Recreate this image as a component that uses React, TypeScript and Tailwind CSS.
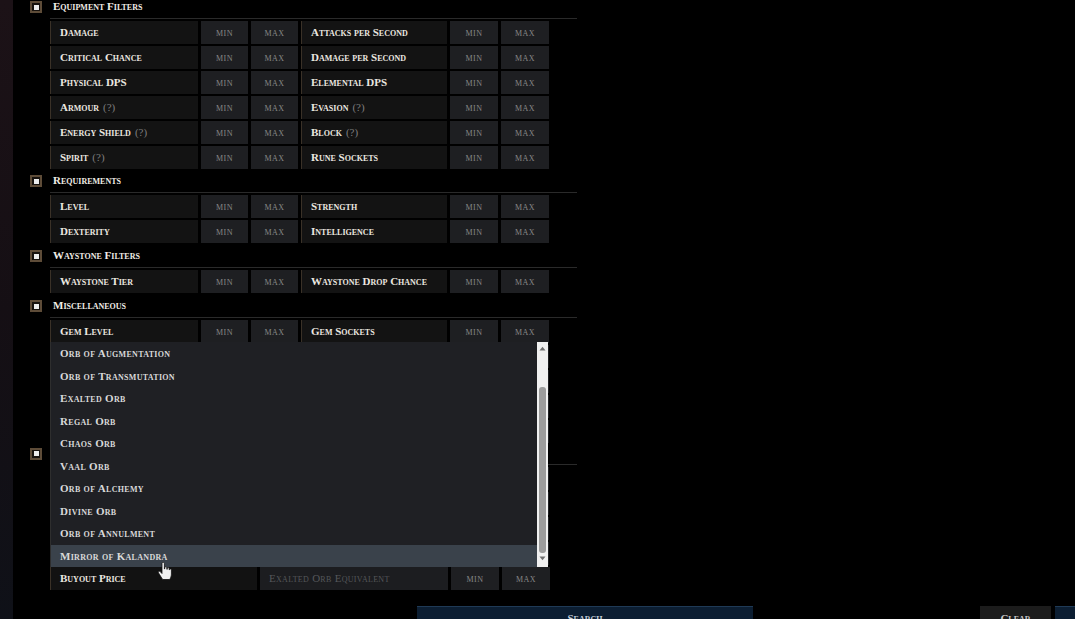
import React from "react";

type Label = { text: string; q?: boolean };

const font = "[font-family:'Liberation_Serif',serif] [font-variant-caps:small-caps]";

function Checkbox() {
  return (
    <div className="w-[12px] h-[12px] border-2 border-[#5e4c38] bg-[#17120e] flex items-center justify-center">
      <div className="w-[5px] h-[5px] bg-[#ececec]" />
    </div>
  );
}

function LabelCell({ label }: { label?: Label }) {
  return (
    <div className="bg-[#131313] border-l border-[#3a3127] pl-[9px] flex items-center text-[11px] font-bold text-[#ece8e0] whitespace-nowrap">
      {label ? (
        <>
          <span>{label.text}</span>
          {label.q && <span className="ml-[4px] font-normal text-[#7e7e7e]">(?)</span>}
        </>
      ) : null}
    </div>
  );
}

function MinMax({ text }: { text: string }) {
  return (
    <div className="bg-[#1e1f22] flex items-center justify-center pb-[2px] text-[12px] tracking-[0.5px] text-[#878787]">
      {text}
    </div>
  );
}

function Row({ a, b }: { a?: Label; b?: Label }) {
  return (
    <div className="grid grid-cols-[148px_47px_47px_146px_48px_48px] gap-x-[3px] h-[23px] w-[499px]">
      <LabelCell label={a} />
      <MinMax text={a ? "min" : ""} />
      <MinMax text={a ? "max" : ""} />
      <LabelCell label={b} />
      <MinMax text={b ? "min" : ""} />
      <MinMax text={b ? "max" : ""} />
    </div>
  );
}

function Section({
  title,
  headerClass = "h-[22px]",
  className = "",
  children,
}: {
  title?: string;
  headerClass?: string;
  className?: string;
  children: React.ReactNode;
}) {
  return (
    <div className={"flex " + className}>
      <div className="w-[37px] shrink-0 flex flex-col">
        <div className={headerClass + " box-content pb-[1px] flex items-center justify-end pr-[8px]"}>
          <Checkbox />
        </div>
      </div>
      <div className="w-[527px]">
        <div
          className={
            headerClass +
            " box-content border-b border-[#2a2a2a] pl-[3px] flex items-center text-[11px] font-bold text-[#f1ede6]"
          }
        >
          <span className="-mt-[2px]">{title}</span>
        </div>
        <div className="pt-[2px] flex flex-col gap-[2px]">{children}</div>
      </div>
    </div>
  );
}

const currencies = [
  "Orb of Augmentation",
  "Orb of Transmutation",
  "Exalted Orb",
  "Regal Orb",
  "Chaos Orb",
  "Vaal Orb",
  "Orb of Alchemy",
  "Divine Orb",
  "Orb of Annulment",
  "Mirror of Kalandra",
];

function Dropdown() {
  return (
    <div className="absolute left-0 bottom-full w-[498px] h-[225px] bg-[#1f2024] border-l border-[#2e2e2e] z-10 flex">
      <div className="flex-1 flex flex-col">
        {currencies.map((c, i) => (
          <div
            key={c}
            className={
              "h-[22.5px] flex items-center pl-[9px] text-[11px] font-bold tracking-[0.3px] text-[#d9d9d9] " +
              (i === currencies.length - 1 ? "bg-[#3a424b]" : "")
            }
          >
            {c}
          </div>
        ))}
      </div>
      <div className="w-[11px] bg-[#f0f0f0] flex flex-col items-center">
        <svg width="7" height="5" viewBox="0 0 7 5" className="mt-[4px]">
          <path d="M0.5 4.5 L3.5 0.8 L6.5 4.5 Z" fill="#6e6e6e" />
        </svg>
        <div className="mt-[36px] w-[7px] h-[166px] rounded-[3px] bg-[#9c9c9c]" />
        <svg width="7" height="5" viewBox="0 0 7 5" className="mt-[3px]">
          <path d="M0.5 0.5 L3.5 4.2 L6.5 0.5 Z" fill="#6e6e6e" />
        </svg>
      </div>
    </div>
  );
}

function BuyoutRow() {
  return (
    <div className="relative grid grid-cols-[207px_188px_48px_48px] gap-x-[3px] h-[23px] w-[499px]">
      <Dropdown />
      <div className="bg-[#121212] border-l border-[#3a3127] pl-[9px] flex items-center text-[11px] font-bold text-[#ece8e0]">
        Buyout Price
      </div>
      <div className="bg-[#1c1d20] pl-[9px] flex items-center text-[11px] tracking-[0.3px] text-[#55575a]">
        Exalted Orb Equivalent
      </div>
      <MinMax text="min" />
      <MinMax text="max" />
      <svg
        width="14"
        height="18"
        viewBox="0 0 14 18"
        className="absolute left-[108px] top-[-5px] z-20"
      >
        <path
          d="M4 1.5c0-.8.6-1.3 1.2-1.3s1.2.5 1.2 1.3V7h.3V5.8c0-.7.5-1.1 1.1-1.1s1.1.4 1.1 1.1V7.3h.3V6.6c0-.6.5-1 1-1s1 .4 1 1v1.2h.2c0-.5.5-.9 1-.9s1 .4 1 1v4.3c0 2.3-1.2 4.3-1.6 5.3H4.7C3.6 16 1.2 12 .6 11c-.4-.7-.3-1.4.3-1.7.6-.3 1.2 0 1.6.5L4 11.5V1.5z"
          fill="#f2f2f2"
          stroke="#111"
          strokeWidth="0.8"
        />
      </svg>
    </div>
  );
}

export default function App() {
  return (
    <div className={"w-[1075px] h-[619px] bg-black overflow-hidden flex " + font}>
      <div className="w-[13px] shrink-0 h-full bg-linear-to-b from-[#1c1217] via-[#150f14] to-[#0f1118]" />
      <div className="flex-1 flex flex-col -mt-[4px]">
        <Section title="Equipment Filters">
          <Row a={{ text: "Damage" }} b={{ text: "Attacks per Second" }} />
          <Row a={{ text: "Critical Chance" }} b={{ text: "Damage per Second" }} />
          <Row a={{ text: "Physical DPS" }} b={{ text: "Elemental DPS" }} />
          <Row a={{ text: "Armour", q: true }} b={{ text: "Evasion", q: true }} />
          <Row a={{ text: "Energy Shield", q: true }} b={{ text: "Block", q: true }} />
          <Row a={{ text: "Spirit", q: true }} b={{ text: "Rune Sockets" }} />
        </Section>
        <Section title="Requirements" className="mt-[1px]">
          <Row a={{ text: "Level" }} b={{ text: "Strength" }} />
          <Row a={{ text: "Dexterity" }} b={{ text: "Intelligence" }} />
        </Section>
        <Section title="Waystone Filters" className="mt-[2px]">
          <Row a={{ text: "Waystone Tier" }} b={{ text: "Waystone Drop Chance" }} />
        </Section>
        <Section title="Miscellaneous" className="mt-[2px]">
          <Row a={{ text: "Gem Level" }} b={{ text: "Gem Sockets" }} />
          <Row />
          <Row />
          <Row />
          <Row />
        </Section>
        <Section headerClass="h-[21px]">
          <Row />
          <Row />
          <Row />
          <Row />
          <BuyoutRow />
        </Section>
        <div className="mt-[16px] flex items-start h-[24px]">
          <div className="ml-[404px] w-[336px] h-[24px] bg-[#0c1e32] border-t border-[#1f3a56] flex items-center justify-center text-[11px] font-bold text-[#c5ced8]">
            Search
          </div>
          <div className="ml-[227px] w-[71px] h-[24px] bg-[#1c1c1c] flex items-center justify-center text-[11px] font-bold text-[#c9c9c9]">
            Clear
          </div>
          <div className="ml-[4px] w-[80px] h-[24px] bg-[#0c1e32] border-t border-[#1f3a56]" />
        </div>
      </div>
    </div>
  );
}
